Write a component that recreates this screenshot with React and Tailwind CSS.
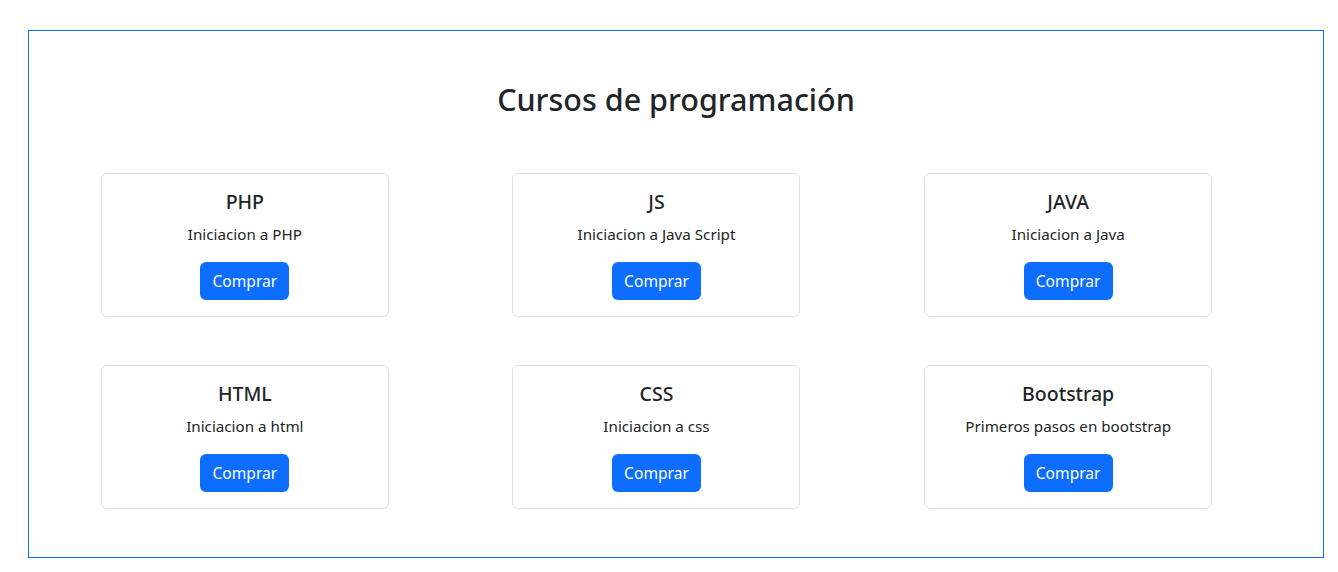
import React from "react";

const cursos = [
  { t: "PHP", d: "Iniciacion a PHP" },
  { t: "JS", d: "Iniciacion a Java Script" },
  { t: "JAVA", d: "Iniciacion a Java" },
  { t: "HTML", d: "Iniciacion a html" },
  { t: "CSS", d: "Iniciacion a css" },
  { t: "Bootstrap", d: "Primeros pasos en bootstrap" },
];

export default function App() {
  return (
    <div className="w-[1338px] h-[572px] bg-white pt-[30px] text-[#212529]" style={{ fontFamily: '"Noto Sans", sans-serif' }}>
      <div className="ml-[28px] w-[1296px] h-[528px] border border-[#0d6efd] pt-[50px]">
        <h1 className="text-center text-[30.5px] leading-[37px] font-medium">Cursos de programación</h1>
        <div className="mt-[55px] ml-[10px] w-[1235px] grid grid-cols-3 gap-y-[48px]">
          {cursos.map((c) => (
            <div key={c.t} className="flex justify-center">
              <div className="w-[288px] h-[144px] border border-[#dfdfdf] rounded-[6px] p-4 flex flex-col items-center">
                <h5 className="text-[19.5px] leading-[24px] font-medium">{c.t}</h5>
                <p className="mt-2 text-[15.2px] leading-[24px]">{c.d}</p>
                <button className="mt-4 h-[38px] px-3 rounded-[6px] bg-[#0d6efd] text-white text-[15.6px] leading-[24px]">Comprar</button>
              </div>
            </div>
          ))}
        </div>
      </div>
    </div>
  );
}
